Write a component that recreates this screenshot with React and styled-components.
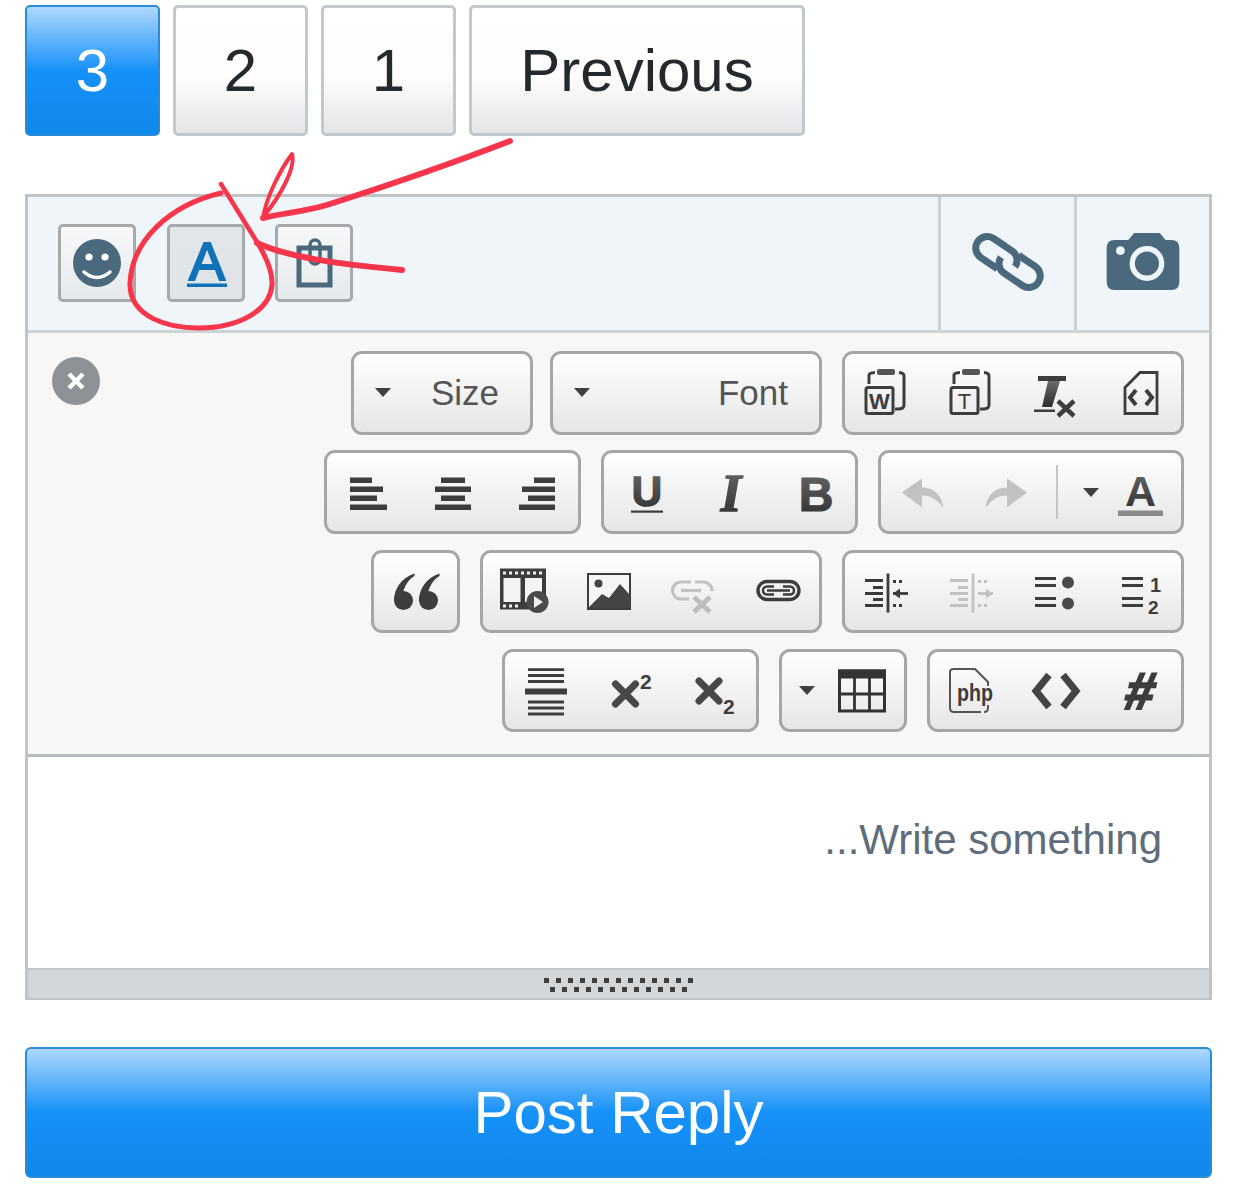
import React from 'react';
import styled, { createGlobalStyle } from 'styled-components';

const slate = '#4a697c';
const ink = '#3d3d3d';
const faded = '#c2c2c2';

const GlobalStyle = createGlobalStyle`
  html, body {
    margin: 0;
    background: #fff;
    font-family: "Liberation Sans", Arial, sans-serif;
  }
  * {
    box-sizing: border-box;
  }
`;

const Page = styled.div`
  position: relative;
  width: 1241px;
  height: 1196px;
  padding: 5px 29px 0 25px;
  overflow: hidden;
`;

const Pagination = styled.div`
  display: flex;
  gap: 13px;
  height: 131px;
`;

const PageButton = styled.button`
  width: ${p => p.$w || 135}px;
  padding: 0;
  font: 60px "Liberation Sans", Arial, sans-serif;
  color: ${p => (p.$active ? '#fff' : '#23292d')};
  border-radius: 5px;
  border: ${p => (p.$active ? '2px solid #2a8bd6' : '3px solid #c3c8cc')};
  background: ${p =>
    p.$active
      ? 'linear-gradient(#aed8fc, #1691f8 50%, #0f88ec)'
      : 'linear-gradient(#fff, #fdfdfd 55%, #e3e5e7)'};
`;

const Editor = styled.div`
  margin-top: 58px;
  height: 806px;
  border: 3px solid #c0c4c7;
  border-bottom-width: 2px;
  display: flex;
  flex-direction: column;
`;

const TopBar = styled.div`
  display: flex;
  align-items: center;
  height: 136px;
  background: #f0f5f9;
  border-bottom: 3px solid #cdd2d5;
`;

const Attachments = styled.div`
  flex: 1;
  display: flex;
  gap: 30.5px;
  padding: 0 0 1px 30px;
`;

const SmallButton = styled.div`
  width: 78px;
  height: 78px;
  display: flex;
  align-items: center;
  justify-content: center;
  border: 3px solid #a6aaad;
  border-radius: 5px;
  background: ${p =>
    p.$active
      ? 'linear-gradient(#e2e6e9, #dfe4e7)'
      : 'linear-gradient(#f6f8f9, #e7eaec)'};
`;

const BarCell = styled.div`
  width: ${p => p.$w}px;
  height: 133px;
  padding-bottom: 4px;
  display: flex;
  align-items: center;
  justify-content: center;
  border-left: 3px solid #cdd2d5;
`;

const Panel = styled.div`
  position: relative;
  height: 424px;
  padding: 18px 25px 0 0;
  display: flex;
  flex-direction: column;
  gap: 15.8px;
  background: #f7f7f7;
  border-bottom: 3px solid #b9bcbe;
`;

const CloseBadge = styled.div`
  position: absolute;
  left: 24px;
  top: 24px;
  width: 48px;
  height: 48px;
  border-radius: 50%;
  background: #8e9195;
  display: flex;
  align-items: center;
  justify-content: center;
`;

const Row = styled.div`
  display: flex;
  justify-content: flex-end;
  gap: 20px;
`;

const SelectPair = styled.div`
  display: flex;
  gap: 17px;
`;

const Group = styled.div`
  width: ${p => p.$w}px;
  height: 83.5px;
  display: flex;
  align-items: center;
  justify-content: ${p => p.$justify || 'space-between'};
  border: 3px solid #a6a6a6;
  border-radius: 11px;
  background: linear-gradient(#fff, #f6f6f6 35%, #e6e6e6);
`;

const Cell = styled.div`
  width: ${p => p.$w || 82}px;
  flex-shrink: 0;
  display: flex;
  justify-content: center;
`;

const Caret = styled.span`
  flex-shrink: 0;
  width: 0;
  height: 0;
  margin-left: ${p => p.$ml}px;
  margin-right: ${p => p.$mr || 0}px;
  border-left: 8.5px solid transparent;
  border-right: 8.5px solid transparent;
  border-top: 9px solid #404040;
`;

const Divider = styled.span`
  flex-shrink: 0;
  width: 2px;
  height: 54px;
  margin-left: 8px;
  background: #c4c4c4;
`;

const SelectLabel = styled.span`
  margin-left: auto;
  padding-right: 31px;
  font-size: 35px;
  color: #555;
`;

const TextArea = styled.div`
  flex: 1;
  padding: 59px 47px 0 0;
  background: #fff;
  text-align: right;
  font-size: 42px;
  line-height: 48px;
  color: #5d6d79;
`;

const StatusBar = styled.div`
  height: 30px;
  padding-top: 8px;
  display: flex;
  flex-direction: column;
  align-items: center;
  gap: 4px;
  background: #d3d6d9;
  border-top: 2px solid #c5c8cb;
`;

const GripRow = styled.div`
  display: flex;
  gap: 7px;
`;

const GripDot = styled.span`
  width: 5px;
  height: 5px;
  background: #3f3f3f;
`;

const PostButton = styled.button`
  display: block;
  width: 100%;
  height: 131px;
  margin-top: 47px;
  padding: 0;
  border: 2px solid #2a8bd6;
  border-radius: 6px;
  font: 60px "Liberation Sans", Arial, sans-serif;
  color: #fff;
  background: linear-gradient(#aed8fc, #1691f8 50%, #0f88ec);
`;

const Scribble = styled.svg`
  position: absolute;
  left: 0;
  top: 0;
  pointer-events: none;
`;

const Defs = styled.svg`
  position: absolute;
  width: 0;
  height: 0;
`;

const Icon = styled.svg.attrs(p => ({
  viewBox: p.viewBox || '0 0 48 48',
  width: p.$size || 48,
  height: p.$size || 48,
}))`
  display: block;
  overflow: visible;
  flex-shrink: 0;
`;

const Glyph = styled.text`
  font-family: "Liberation Sans", Arial, sans-serif;
  font-weight: ${p => p.$weight || 'bold'};
  fill: ${p => p.$fill || ink};
  stroke: ${p => (p.$stroke ? p.$fill || ink : 'none')};
  stroke-width: ${p => p.$stroke || 0}px;
`;

const SerifGlyph = styled(Glyph)`
  font-family: "Liberation Serif", "Times New Roman", serif;
  font-style: italic;
`;

const fade = 'url(#letterFade)';

const Smiley = () => (
  <Icon>
    <circle cx="24" cy="24" r="24" fill={slate} />
    <circle cx="16" cy="18" r="3.6" fill="#fff" />
    <circle cx="32" cy="18" r="3.6" fill="#fff" />
    <path d="M11 33 Q24 44 37 33" fill="none" stroke="#fff" strokeWidth="3.5" strokeLinecap="round" />
  </Icon>
);

const BlueLetter = () => (
  <Icon>
    <Glyph x="25" y="40.5" textAnchor="middle" fontSize="54" $weight="normal" $fill="#1272b8" $stroke={2}>A</Glyph>
    <rect x="5" y="44.5" width="40" height="3.5" fill="#1272b8" />
  </Icon>
);

const Clipboard = () => (
  <Icon>
    <rect x="9" y="9" width="31" height="37" fill="none" stroke={slate} strokeWidth="5" />
    <path d="M20 20 V6 a5 5 0 0 1 10 0 V20 a5 5 0 0 1 -10 0" fill="none" stroke={slate} strokeWidth="3.5" />
  </Icon>
);

const ChainLink = () => (
  <svg width="80" height="64" viewBox="-40 -32 80 64">
    <g transform="rotate(34)" fill="none" stroke={slate} strokeWidth="7">
      <path d="M-5 11.5 H-25 A11.5 11.5 0 0 1 -25 -11.5 H-3 A11.5 11.5 0 0 1 8.5 0" />
      <path d="M5 -11.5 H25 A11.5 11.5 0 0 1 25 11.5 H3 A11.5 11.5 0 0 1 -8.5 0" />
    </g>
  </svg>
);

const Camera = () => (
  <svg width="74" height="57" viewBox="0 0 74 58">
    <path d="M8 7 H22 L28 0 H54 L60 7 H66 Q74 7 74 15 V49 Q74 58 66 58 H8 Q0 58 0 49 V15 Q0 7 8 7 Z" fill={slate} />
    <circle cx="41" cy="31" r="15" fill="none" stroke="#f0f5f9" strokeWidth="5.5" />
    <circle cx="14" cy="18" r="4.5" fill="#f0f5f9" />
  </svg>
);

const PasteFrame = ({ children }) => (
  <Icon>
    <rect x="15" y="0" width="18" height="6" rx="2" fill="#555" />
    <path d="M7 15 V6 Q7 4 13 3.5 M37 3.5 Q42 4 42 7 V36 Q42 40 36 40 H33" fill="none" stroke={ink} strokeWidth="3" />
    <rect x="4" y="18.5" width="27" height="26" rx="2" fill="none" stroke={ink} strokeWidth="3" />
    {children}
  </Icon>
);

const RemoveFormat = () => (
  <Icon>
    <rect x="7" y="7" width="28" height="5" fill={ink} />
    <polygon points="17,12 29,12 21,38 11,38" fill={fade} />
    <rect x="3" y="40.5" width="21" height="2.5" fill={ink} />
    <path d="M27 32 L43 47 M43 32 L27 47" stroke={ink} strokeWidth="4.5" />
  </Icon>
);

const SourceDoc = () => (
  <Icon>
    <path d="M9 18.5 L24 3.5 H41 V44.5 H9 Z" fill="none" stroke={ink} strokeWidth="2.8" />
    <path d="M20 21 L14 28.5 L20 36 M30 21 L36 28.5 L30 36" fill="none" stroke={ink} strokeWidth="4" />
  </Icon>
);

const AlignBars = ({ bars }) => (
  <Icon>
    {bars.map(([x, w], i) => (
      <rect key={i} x={x} y={9.5 + i * 9} width={w} height="5.5" fill={ink} />
    ))}
  </Icon>
);

const UnderlineLetter = () => (
  <Icon>
    <Glyph x="26" y="37.5" textAnchor="middle" fontSize="42" $fill={fade} $stroke={1.5}>U</Glyph>
    <rect x="10" y="42.5" width="32" height="2.2" fill={ink} />
  </Icon>
);

const ItalicLetter = () => (
  <Icon>
    <SerifGlyph x="25" y="42.5" textAnchor="middle" fontSize="53" $fill={fade} $stroke={1.5}>I</SerifGlyph>
  </Icon>
);

const BoldLetter = () => (
  <Icon>
    <Glyph x="26" y="42.5" textAnchor="middle" fontSize="48" $fill={fade} $stroke={1.2}>B</Glyph>
  </Icon>
);

const ReplyArrow = ({ flip }) => (
  <Icon>
    <path
      transform={flip ? 'translate(47 0) scale(-1 1)' : undefined}
      d="M3 24.5 L23 10.5 V19.5 C36 19.5 44 29.5 44 39.5 C37 30.5 31 27.5 23 27.5 V39.5 Z"
      fill={faded}
    />
  </Icon>
);

const TextColor = () => (
  <Icon>
    <Glyph x="24.5" y="37.5" textAnchor="middle" fontSize="43" $fill={fade}>A</Glyph>
    <rect x="2" y="42.5" width="45" height="5.5" fill="#8a8a8a" />
  </Icon>
);

const Quote = () => (
  <Icon>
    {[0, 25].map(dx => (
      <g key={dx} transform={`translate(${dx} 0)`} fill={ink}>
        <circle cx="11.5" cy="33.5" r="9.5" />
        <path d="M22.5 6.5 C9 11 2 22 2 34 L10 34 C10 24 14 14 22.5 9 Z" />
      </g>
    ))}
  </Icon>
);

const Film = () => (
  <Icon>
    <rect x="0" y="1.5" width="46" height="41" fill={ink} />
    <rect x="3.5" y="11" width="17" height="24" fill="#f4f4f4" />
    <rect x="25" y="11" width="17" height="24" fill="#f4f4f4" />
    {[3, 9, 15, 21, 27, 33, 39].map(x => (
      <rect key={x} x={x} y="4.5" width="3" height="3" fill="#eee" />
    ))}
    {[3, 9, 15].map(x => (
      <rect key={x} x={x} y="37.5" width="3" height="3" fill="#eee" />
    ))}
    <circle cx="37.5" cy="35" r="11" fill="#4a4a4a" />
    <polygon points="34,29 34,41 43,35" fill="#eee" />
  </Icon>
);

const Picture = () => (
  <Icon>
    <rect x="3" y="7" width="42" height="35" fill="#f6f6f6" stroke={ink} strokeWidth="2" />
    <circle cx="13.5" cy="16.5" r="4" fill="#444" />
    <polygon points="3,41 17,27 24,31 35,17 45,28 45,41" fill="#444" />
  </Icon>
);

const Unlink = () => (
  <Icon>
    <path d="M22 15 H12 a8.5 8.5 0 0 0 0 17 H20 M26 15 H35 a8.5 8.5 0 0 1 8 9" fill="none" stroke={faded} strokeWidth="3.2" />
    <path d="M12 23.5 H32" fill="none" stroke={faded} strokeWidth="3.2" />
    <path d="M25 30 L41 45 M41 30 L25 45" stroke="#bdbdbd" strokeWidth="5" />
  </Icon>
);

const Link2 = () => (
  <Icon>
    <rect x="4" y="14.5" width="41" height="18" rx="9" fill="none" stroke={ink} strokeWidth="3.4" />
    <path d="M20 19.5 H13 a4 4 0 0 0 0 8 H20 M29 19.5 H36 a4 4 0 0 1 0 8 H29 M13 23.5 H36" fill="none" stroke={ink} strokeWidth="2.6" />
  </Icon>
);

const Indent = ({ color, flip }) => (
  <Icon>
    <g stroke={color} strokeWidth="2.8">
      <path d="M3 13.5 H21 M11 20.5 H21 M3 26.5 H21 M11 32.5 H21 M3 38.5 H21" />
      <path d="M26 6.5 V45.5" />
      <path d="M31 14.5 H34 M37 14.5 H40 M31 38.5 H34 M37 38.5 H40" />
      <path d="M31 26.5 H46" />
    </g>
    <polygon
      points={flip ? '46,26.5 39,21.5 39,31.5' : '31,26.5 38,21.5 38,31.5'}
      fill={color}
    />
  </Icon>
);

const BulletList = () => (
  <Icon>
    <path d="M4 11.5 H25 M4 18.5 H25 M4 31.5 H25 M4 38.5 H25" stroke={ink} strokeWidth="3" />
    <circle cx="37" cy="15.5" r="6" fill="#4a4a4a" />
    <circle cx="37" cy="36.5" r="6" fill="#4a4a4a" />
  </Icon>
);

const NumberList = () => (
  <Icon>
    <path d="M6 11.5 H27 M6 18.5 H27 M6 31.5 H27 M6 38.5 H27" stroke={ink} strokeWidth="3" />
    <Glyph x="34" y="25" fontSize="20">1</Glyph>
    <Glyph x="32" y="47" fontSize="19">2</Glyph>
  </Icon>
);

const Justify = () => (
  <Icon>
    <path d="M6 2.7 H42 M6 8.5 H42 M6 14.5 H42 M6 35 H42 M6 41 H42 M6 47 H42" stroke={ink} strokeWidth="2.8" />
    <rect x="3" y="21.5" width="42" height="6" fill={ink} />
  </Icon>
);

const Cross = ({ x, y, s }) => (
  <path
    d={`M${x + 3} ${y + 3} L${x + s - 3} ${y + s - 3} M${x + s - 3} ${y + 3} L${x + 3} ${y + s - 3}`}
    stroke="#484848"
    strokeWidth="7"
    strokeLinecap="round"
  />
);

const Superscript = () => (
  <Icon>
    <Cross x={5.5} y={14} s={26} />
    <Glyph x="33" y="21.5" fontSize="21">2</Glyph>
  </Icon>
);

const Subscript = () => (
  <Icon>
    <Cross x={5} y={11} s={26} />
    <Glyph x="32" y="46.5" fontSize="21">2</Glyph>
  </Icon>
);

const TableGrid = () => (
  <Icon>
    <rect x="0" y="2.5" width="48" height="9" fill="#333" />
    <rect x="1.5" y="4" width="45" height="40" fill="none" stroke="#333" strokeWidth="3" />
    <path d="M16.5 10 V44 M31.5 10 V44 M1 27 H47" stroke="#333" strokeWidth="2.8" />
  </Icon>
);

const PhpFile = () => (
  <Icon>
    <path d="M34 45 H7 Q3 45 3 41 V5 Q3 2 7 2 H28 L41 15 V19 M41 38 V41 Q41 45 37 45" fill="none" stroke="#555" strokeWidth="2" />
    <Glyph x="10" y="33.5" fontSize="24" textLength="36" lengthAdjust="spacingAndGlyphs">php</Glyph>
  </Icon>
);

const CodeBrackets = () => (
  <Icon>
    <path d="M17 8 L4 24 L17 40 M31 8 L44 24 L31 40" fill="none" stroke="#444" strokeWidth="7" />
  </Icon>
);

const Hash = () => (
  <Icon>
    <g transform="translate(5 0) skewX(-12)">
      <Glyph x="25" y="42" textAnchor="middle" fontSize="52" $stroke={2.2}>#</Glyph>
    </g>
  </Icon>
);

const App = () => (
  <Page>
    <GlobalStyle />
    <Defs>
      <defs>
        <linearGradient id="letterFade" x1="0" y1="0" x2="0" y2="1">
          <stop offset="0" stopColor="#6a6a6a" />
          <stop offset="1" stopColor="#2e2e2e" />
        </linearGradient>
      </defs>
    </Defs>

    <Pagination>
      <PageButton $active>3</PageButton>
      <PageButton>2</PageButton>
      <PageButton>1</PageButton>
      <PageButton $w={336}>Previous</PageButton>
    </Pagination>

    <Editor>
      <TopBar>
        <Attachments>
          <SmallButton><Smiley /></SmallButton>
          <SmallButton $active><BlueLetter /></SmallButton>
          <SmallButton><Clipboard /></SmallButton>
        </Attachments>
        <BarCell $w={136}><ChainLink /></BarCell>
        <BarCell $w={135}><Camera /></BarCell>
      </TopBar>

      <Panel>
        <CloseBadge>
          <Icon $size={22} viewBox="0 0 22 22">
            <path d="M4 4 L18 18 M18 4 L4 18" stroke="#fff" strokeWidth="4.5" />
          </Icon>
        </CloseBadge>

        <Row>
          <SelectPair>
            <Group $w={182} $justify="flex-start">
              <Caret $ml={21} />
              <SelectLabel>Size</SelectLabel>
            </Group>
            <Group $w={272} $justify="flex-start">
              <Caret $ml={21} />
              <SelectLabel>Font</SelectLabel>
            </Group>
          </SelectPair>
          <Group $w={342}>
            <Cell><PasteFrame><Glyph x="17.5" y="39.5" textAnchor="middle" fontSize="22">W</Glyph></PasteFrame></Cell>
            <Cell><PasteFrame><Glyph x="17.5" y="39.5" textAnchor="middle" fontSize="22" $weight="normal">T</Glyph></PasteFrame></Cell>
            <Cell><RemoveFormat /></Cell>
            <Cell><SourceDoc /></Cell>
          </Group>
        </Row>

        <Row>
          <Group $w={257}>
            <Cell><AlignBars bars={[[6, 22], [6, 33], [6, 27], [6, 37]]} /></Cell>
            <Cell><AlignBars bars={[[12, 24], [6, 36], [12, 24], [6, 36]]} /></Cell>
            <Cell><AlignBars bars={[[21, 21], [9, 33], [15, 27], [6, 36]]} /></Cell>
          </Group>
          <Group $w={257}>
            <Cell><UnderlineLetter /></Cell>
            <Cell><ItalicLetter /></Cell>
            <Cell><BoldLetter /></Cell>
          </Group>
          <Group $w={306} $justify="flex-start">
            <Cell $w={84}><ReplyArrow /></Cell>
            <Cell $w={83}><ReplyArrow flip /></Cell>
            <Divider />
            <Caret $ml={25} />
            <Cell $w={81}><TextColor /></Cell>
          </Group>
        </Row>

        <Row>
          <Group $w={89}>
            <Cell $w={83}><Quote /></Cell>
          </Group>
          <Group $w={342}>
            <Cell><Film /></Cell>
            <Cell><Picture /></Cell>
            <Cell><Unlink /></Cell>
            <Cell><Link2 /></Cell>
          </Group>
          <Group $w={342}>
            <Cell><Indent color="#3a3a3a" /></Cell>
            <Cell><Indent color={faded} flip /></Cell>
            <Cell><BulletList /></Cell>
            <Cell><NumberList /></Cell>
          </Group>
        </Row>

        <Row>
          <Group $w={257}>
            <Cell><Justify /></Cell>
            <Cell><Superscript /></Cell>
            <Cell><Subscript /></Cell>
          </Group>
          <Group $w={128} $justify="flex-start">
            <Caret $ml={17} $mr={23} />
            <TableGrid />
          </Group>
          <Group $w={257}>
            <Cell><PhpFile /></Cell>
            <Cell><CodeBrackets /></Cell>
            <Cell><Hash /></Cell>
          </Group>
        </Row>
      </Panel>

      <TextArea>...Write something</TextArea>

      <StatusBar>
        <GripRow>
          {Array.from({ length: 13 }, (_, i) => <GripDot key={i} />)}
        </GripRow>
        <GripRow>
          {Array.from({ length: 12 }, (_, i) => <GripDot key={i} />)}
        </GripRow>
      </StatusBar>
    </Editor>

    <PostButton>Post Reply</PostButton>

    <Scribble width="1241" height="1196" viewBox="0 0 1241 1196" fill="none" stroke="#f7364b" strokeLinecap="round" strokeLinejoin="round">
      <path d="M510 141 C440 168 380 188 330 204 C305 212 282 213 263 218" strokeWidth="6" />
      <path d="M263 218 C266 198 280 170 292 154 C296 168 280 196 264 216" strokeWidth="4" />
      <path d="M221 184 L257 242" strokeWidth="4.5" />
      <path d="M221 193 C170 205 132 240 130 283 C129 318 170 328 198 328 C240 328 270 310 272 285 C273 270 265 255 257 242" strokeWidth="5" />
      <path d="M257 243 C290 258 340 264 402 270" strokeWidth="6" />
    </Scribble>
  </Page>
);

export default App;
